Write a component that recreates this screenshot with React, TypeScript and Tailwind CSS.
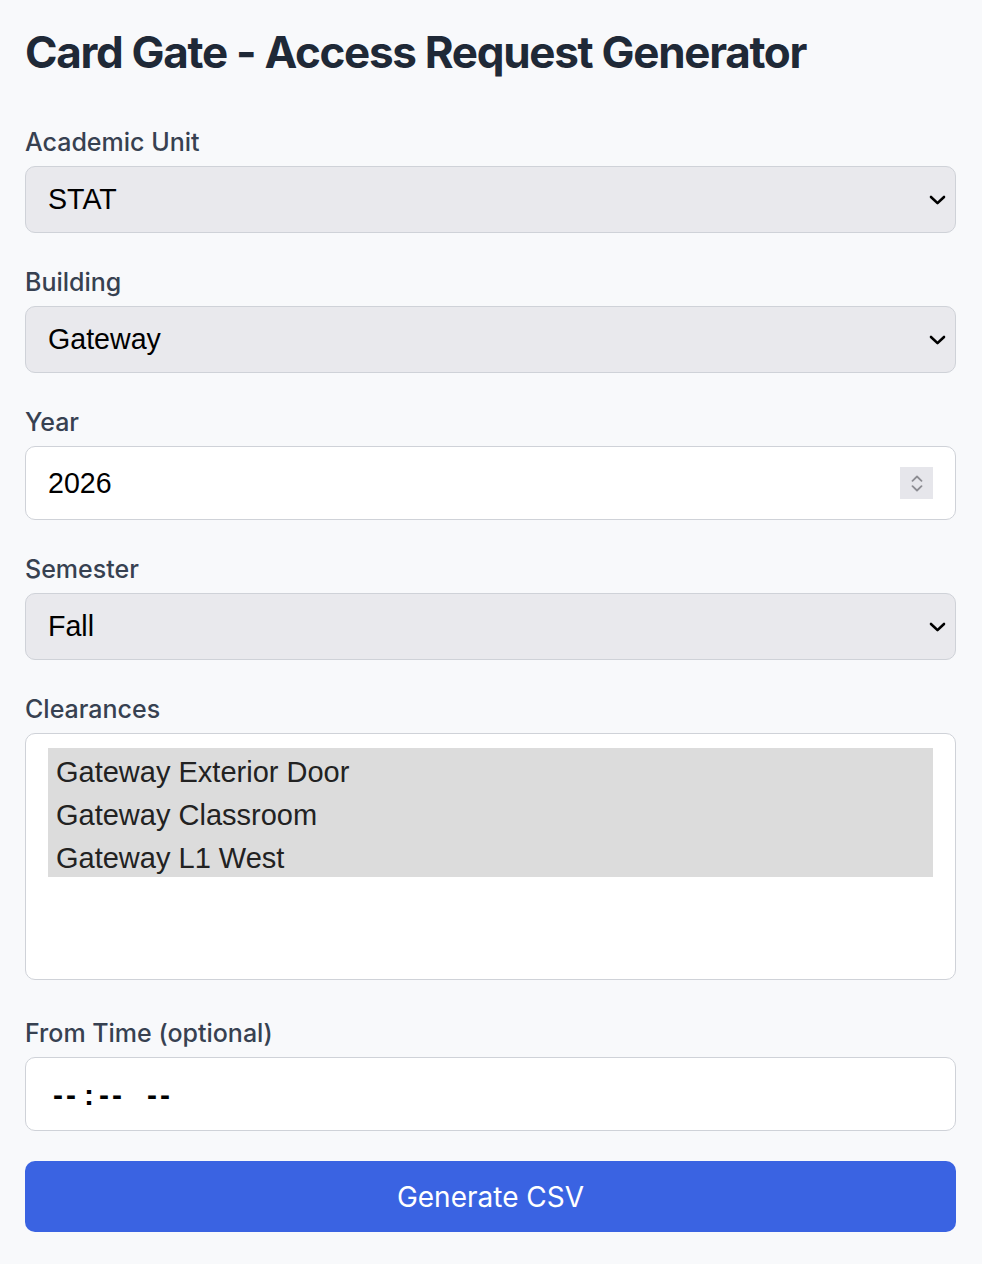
import React from "react";

const Chevron = () => (
  <svg
    className="pointer-events-none absolute right-[10px] top-1/2 -translate-y-1/2"
    width="17"
    height="11"
    viewBox="0 0 17 11"
    fill="none"
  >
    <path d="M2 2.5 L8.5 8.6 L15 2.5" stroke="#000" strokeWidth="2.6" strokeLinecap="round" strokeLinejoin="round" />
  </svg>
);

const Label = ({ children }: { children: React.ReactNode }) => (
  <label className="block text-[25px] leading-[30px] font-medium text-[#374151] mb-[9px]" style={{ fontFamily: "Inter, 'Noto Sans', sans-serif" }}>
    {children}
  </label>
);

const Select = ({ value }: { value: string }) => (
  <div className="relative">
    <select
      defaultValue={value}
      className="block w-full h-[67px] appearance-none rounded-[10px] border border-[#cfd2d8] bg-[#e9e9ed] pl-[22px] pr-[40px] text-[28.6px] text-black outline-none"
      style={{ fontFamily: "'Liberation Sans', Arial, sans-serif" }}
    >
      <option value={value}>{value}</option>
    </select>
    <Chevron />
  </div>
);

export default function App() {
  const sans = { fontFamily: "'Liberation Sans', Arial, sans-serif" };
  return (
    <div className="min-h-[1264px] w-full bg-[#f8f9fb] pl-[25px] pr-[26px] pt-[26px] pb-[30px]">
      <h1
        className="text-[44px] leading-[52px] font-bold tracking-[-1.3px] text-[#1f2937] mb-[49px]"
        style={{ fontFamily: "Inter, 'Noto Sans', sans-serif" }}
      >
        Card Gate - Access Request Generator
      </h1>

      <div>
        <Label>Academic Unit</Label>
        <Select value="STAT" />
      </div>

      <div className="mt-[34px]">
        <Label>Building</Label>
        <Select value="Gateway" />
      </div>

      <div className="mt-[34px]">
        <Label>Year</Label>
        <div className="flex h-[74px] items-center justify-between rounded-[10px] border border-[#cfd2d8] bg-white pl-[22px] pr-[22px]">
          <span className="text-[28.6px] text-black" style={sans}>2026</span>
          <div className="flex h-[32px] w-[33px] flex-col items-center justify-center gap-[3px] bg-[#e6e6eb]">
            <svg width="12" height="7" viewBox="0 0 12 7" fill="none">
              <path d="M1.5 5.8 L6 1.5 L10.5 5.8" stroke="#8d8d93" strokeWidth="1.8" strokeLinecap="round" strokeLinejoin="round" />
            </svg>
            <svg width="12" height="7" viewBox="0 0 12 7" fill="none">
              <path d="M1.5 1.2 L6 5.5 L10.5 1.2" stroke="#8d8d93" strokeWidth="1.8" strokeLinecap="round" strokeLinejoin="round" />
            </svg>
          </div>
        </div>
      </div>

      <div className="mt-[34px]">
        <Label>Semester</Label>
        <Select value="Fall" />
      </div>

      <div className="mt-[34px]">
        <Label>Clearances</Label>
        <div className="h-[247px] rounded-[10px] border border-[#cfd2d8] bg-white px-[22px] pt-[14px]">
          <div className="bg-[#dcdcdc] text-[29px] text-[#222]" style={sans}>
            <div className="h-[43px] leading-[48px] px-[8px]">Gateway Exterior Door</div>
            <div className="h-[43px] leading-[48px] px-[8px]">Gateway Classroom</div>
            <div className="h-[43px] leading-[48px] px-[8px]">Gateway L1 West</div>
          </div>
        </div>
      </div>

      <div className="mt-[38px]">
        <Label>From Time (optional)</Label>
        <div className="flex h-[74px] items-center rounded-[10px] border border-[#cfd2d8] bg-white pl-[27px] pt-[0px]">
          <div className="flex items-center text-[30px] font-bold text-black" style={sans}>
            <span className="tracking-[3px]">--</span>
            <span className="ml-[5px]">:</span>
            <span className="ml-[5px] tracking-[3px]">--</span>
            <span className="ml-[22px] tracking-[3px]">--</span>
          </div>
        </div>
      </div>

      <button
        className="mt-[30px] flex h-[71px] w-full items-center justify-center rounded-[10px] bg-[#3a63e2] text-[28px] text-white"
        style={{ fontFamily: "Inter, 'Noto Sans', sans-serif" }}
      >
        Generate CSV
      </button>
    </div>
  );
}
